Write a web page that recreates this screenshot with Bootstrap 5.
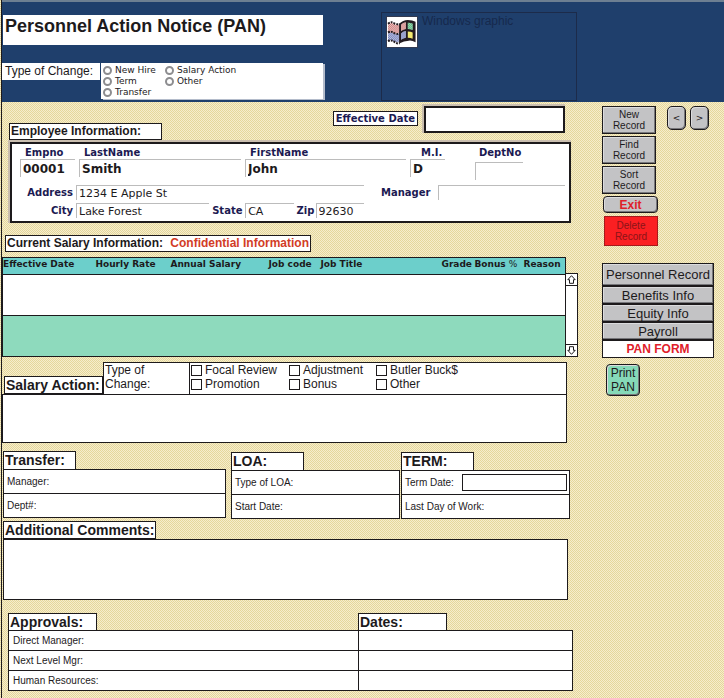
<!DOCTYPE html>
<html lang="en">
<head>
<meta charset="utf-8">
<meta name="viewport" content="width=device-width, initial-scale=1">
<title>Personnel Action Notice (PAN)</title>
<link href="https://cdn.jsdelivr.net/npm/bootstrap@5.3.0/dist/css/bootstrap.min.css" rel="stylesheet">
<style>
:root{--ink:#1d1a1c;--navy:#1f3f6c;--label:#1c1a52;--teal:#6ccfcb;--mint:#8edabd}
body{font-family:"Liberation Sans",Arial,sans-serif;font-size:12px;line-height:14px;color:var(--ink);
 background:repeating-conic-gradient(#f6edcd 0 25%,#e5d79b 0 50%) 0 0/2px 2px}
input,textarea,button{font:inherit;color:inherit;border-radius:0}
input,textarea{min-width:0;background:#fff;outline-offset:-1px}
.shell{min-height:100vh;margin-left:1px;border-left:1px solid var(--ink)}
.dj{font-family:"DejaVu Sans",Verdana,sans-serif}

/* banner */
.masthead{background:var(--navy);border-top:2px solid #6d7f92;height:102px;display:grid;
 grid-template-columns:minmax(0,321fr) minmax(0,58fr) minmax(0,196fr) minmax(0,147fr)}
.title-box{background:#fff;height:30px;margin:13px 0 18px 1px;padding:0 2px;font-size:18px;line-height:22px;font-weight:700;white-space:nowrap}
.kind-label{background:#fff;height:17px;line-height:16px;width:98px;padding-left:3px;white-space:nowrap}
.kind-box{background:#fff;height:36px;margin-left:1px;box-shadow:2px 1px 0 #b4bccb;padding:2px 0 0 2px;
 display:grid;grid-template:repeat(3,11px)/62px 1fr}
.kind-box label{font-size:9px;line-height:11px;display:flex;align-items:center;gap:3px;white-space:nowrap}
.kind-box input{appearance:none;width:9px;height:9px;border:2px solid #8d8d90;border-radius:50%;margin:0}
.kind-box input:checked{background:#333}
.graphic{grid-column:3;border:1px solid #1c2b4a;margin:10px 0 1px;padding:3px 4px;color:#16294d}
.graphic svg{width:32px;height:32px;background:#fff;border:1px solid #333a50}
.graphic span{margin-top:-2px}

.columns{display:grid;grid-template-columns:minmax(0,1fr) 112px;column-gap:22px;padding-right:10px}

/* heading tabs and framed boxes */
.tab{background:#fff;border:1px solid var(--ink);font-weight:700;padding:0 1px;white-space:nowrap;display:block;width:max-content}
.tab-l{font-size:14px;height:18px;line-height:17px}
.tab-s{font-size:12px;height:17px;line-height:15px}
.tab.w73{width:73px}
.tab.w89{width:89px}
.boxed{background:#fff;border:1px solid var(--ink)}
.area{display:block;width:100%;border:1px solid var(--ink);resize:none;padding:2px 4px}

/* employee panel */
#empinfo{margin:0 0 0 7px;width:153px}
.eff label{font-size:10px;line-height:13px;font-weight:700;color:var(--label);border:1px solid var(--ink);background:#fff;padding:0 2px;margin-top:9px;white-space:nowrap}
.eff input{width:141px;height:27px;border:2px solid var(--ink);margin:4px 15px 7px 6px;box-shadow:-1px -1px 0 1px #cbbfb0}
.emp{border:2px solid var(--ink);background:#fff;margin:2px 9px 0 8px;height:81px;padding:3px 4px 0 8px;box-shadow:-1px -1px 0 1px #cbbfb0}
.emp label{font-size:10px;line-height:12px;font-weight:700;color:var(--label);white-space:nowrap}
.emp input{border:0;border-top:1px solid #bcbcbc;border-left:1px solid #bcbcbc;padding:0 2px;width:100%;display:block}
.names{display:grid;grid-template-columns:minmax(0,55fr) minmax(0,162fr) minmax(0,161fr) minmax(0,35fr) minmax(0,48fr);column-gap:4px;padding-right:68px;height:38px}
.names label{display:block;padding-left:5px}
.names input{font-size:12px;font-weight:700;height:18px}
.names .mi label{padding-left:11px}
.names .dept{margin:0 -26px 0 26px}
.names .dept label{padding-left:4px;margin-bottom:3px}
.place{display:grid;grid-template-columns:53px minmax(0,132fr) 30px minmax(0,48fr) 16px minmax(0,48fr);column-gap:3px;row-gap:3px;flex:344 1 0;min-width:0}
.place label,.mgr label{align-self:center;text-align:right}
.place input,.mgr input{font-size:11px;height:15px}
.place .wide{grid-column:2/-1}
.mgr{flex:184 1 0;min-width:0;margin-left:17px}

/* salary history */
.sal-title{margin:12px 0 5px 3px}
.conf{color:#d23c26}
.sal{margin-right:2px}
.grid-table{width:100%;table-layout:fixed;border-collapse:collapse;font-size:9px}
.grid-table th{background:var(--teal);border:0 solid var(--ink);border-width:1px 0;height:17px;line-height:13px;padding:0 0 2px 1px;vertical-align:top;white-space:nowrap}
.grid-table th:first-child{border-left-width:1px;padding-left:0}
.grid-table th:last-child{border-right-width:1px}
.grid-table td{height:41px;border:1px solid var(--ink);background:#fff;padding:0}
.grid-table tr.alt td{background:var(--mint)}
.c-date{width:92px}.c-rate{width:75px}.c-sal{width:98px}.c-code{width:52px}.c-title{width:121px}.c-grade{width:33px}.c-bonus{width:49px}
.scroller{width:13px;margin-left:-1px;margin-top:16px;border:1px solid var(--ink);background:#fff;display:flex;flex-direction:column;justify-content:space-between;flex:none}
.scroller button{border:0;background:#fff;padding:0;height:12px;line-height:0}
.scroller button:first-child{border-bottom:1px solid var(--ink)}
.scroller button:last-child{border-top:1px solid var(--ink)}

/* salary action */
.act{margin:5px 13px 0 0}
.act .boxed{height:33px}
.act-tab{margin:0 0 1px 2px;width:99px}
.act-type{width:87px;padding:0 0 2px 1px}
.act-area{height:49px;margin-top:-1px}
.checks{display:grid;grid-template-columns:98px 87px 1fr;grid-auto-rows:14px;padding:0 0 2px 1px;flex:1;margin-left:-1px}
.checks label{display:flex;align-items:center;gap:3px;white-space:nowrap}
.checks input{appearance:none;width:11px;height:11px;border:1px solid var(--ink);margin:0}
.checks input:checked{background:var(--ink)}

/* transfer, leave, termination */
.trio{display:grid;grid-template-columns:minmax(0,227fr) minmax(0,169fr) minmax(0,169fr);column-gap:1px;margin:8px 10px 0 1px}
.trio section:first-child{margin-right:4px}
.trio section+section{padding-top:1px}
.pair{border:1px solid var(--ink);background:#fff;font-size:10px}
.trio .tab{border-bottom:0}
.pair>div{display:flex;align-items:center;height:23px;padding:0 2px 0 3px;white-space:nowrap}
.pair>div+div{border-top:1px solid var(--ink);height:24px}
.pair input{flex:1;border:0;height:17px}
.pair input.framed{border:1px solid var(--ink);margin-left:8px}

.comm{margin:2px 12px 0 1px}
.comm-area{height:61px}
.appr{margin:13px 7px 6px 6px}
.tabs2{display:grid;grid-template-columns:350fr 215fr}
.sign{width:100%;border-collapse:collapse;table-layout:fixed;font-size:10px;margin-top:-1px}
.sign th,.sign td{border:1px solid var(--ink);background:#fff;height:20px;padding:0 4px;font-weight:400;line-height:12px}
.sign th{width:62%}
.sign input{border:0;width:100%;height:16px;display:block}

/* side rail */
.rail-top{padding-top:4px}
.gb{background:#c3c3c5;border:1px solid var(--ink);box-shadow:inset -1px -1px 0 #77777b,inset 1px 1px 0 #dcdcde;padding:0;display:block}
.rec{width:54px;height:28px;font-size:10px;line-height:11px;margin-bottom:2px}
.rec.del{background:#fb1f22;color:#8a1418;height:30px;margin:3px 0 0 2px;box-shadow:none;border-color:#a51a1c}
.exit{width:55px;height:17px;border-radius:4px;color:#e0202a;font-weight:700;line-height:14px;margin-left:1px}
.steps{margin-right:5px}
.nav-b{width:19px;height:24px;border-radius:5px;font-size:9px}
.menu{margin-top:17px}
.menu .gb{width:100%;height:18px;line-height:15px;font-size:13px}
.menu .gb:first-child{height:23px}
.menu .gb.on{background:#fff;color:#e0202a;font-size:12px;font-weight:700;box-shadow:none}
.print{background:#86d9b8;width:34px;height:32px;border-radius:4px;line-height:14px;margin:6px 0 0 4px}
</style>
</head>
<body>
<div class="shell">
<header class="masthead">
  <div>
    <h1 class="title-box">Personnel Action Notice (PAN)</h1>
    <div class="d-flex align-items-start" role="radiogroup" aria-labelledby="kind">
      <div class="kind-label flex-shrink-0" id="kind">Type of Change:</div>
      <div class="kind-box dj flex-grow-1">
        <label><input type="radio" name="kind">New Hire</label><label><input type="radio" name="kind">Salary Action</label>
        <label><input type="radio" name="kind">Term</label><label><input type="radio" name="kind">Other</label>
        <label><input type="radio" name="kind">Transfer</label>
      </div>
    </div>
  </div>
  <div class="graphic d-flex align-items-start gap-1">
    <svg class="flex-shrink-0" viewBox="0 0 31 31" aria-hidden="true">
      <defs>
        <pattern id="pr" width="2" height="2" patternUnits="userSpaceOnUse"><path fill="#b8403e" d="M0 0h1v1H0zM1 1h1v1H1z"/></pattern>
        <pattern id="pb" width="2" height="2" patternUnits="userSpaceOnUse"><path fill="#34459c" d="M0 0h1v1H0zM1 1h1v1H1z"/></pattern>
        <pattern id="pg" width="2" height="2" patternUnits="userSpaceOnUse"><path fill="#1f9d57" d="M0 0h1v1H0zM1 1h1v1H1z"/></pattern>
      </defs>
      <path fill="url(#pr)" d="M1 8q3-3 6-1q3 2 6 1v8q-3 2-6 1q-3-2-6 0z"/>
      <path fill="url(#pb)" d="M1 17q3-2 6 0q3 1 6 0v8q-3 2-6 0q-3-2-6 0z"/>
      <path fill="none" stroke="#231b20" stroke-width="2" stroke-dasharray="2 1" d="M1 7q4-3 7 0q3 1 5 0M1 16q4-2 7 1q3 1 5 0M1 25q4-2 7 1q3 2 5 1"/>
      <path fill="#231b20" d="M12.500 7q4-4 9-4q5 0 8 2v21q-4-2-7-1.500q-5 0-10 3z"/>
      <path fill="#fff" d="M14.500 8q2-2 5-2.500v7q-3 .5-5 2zM14.500 17q2-2 5-2.500v7q-3 .5-5 2z"/>
      <path fill="url(#pr)" d="M14.500 8q2-2 5-2.500v7q-3 .5-5 2z"/>
      <path fill="url(#pb)" d="M14.500 17q2-2 5-2.500v7q-3 .5-5 2z"/>
      <path fill="#d9f2df" d="M21.500 6q3 0 5 1v6.500q-2-1-5-1z"/>
      <path fill="url(#pg)" d="M21.500 6q3 0 5 1v6.500q-2-1-5-1z"/>
      <path fill="#f3ea70" d="M21.500 15q3 0 5 1v6.500q-2-1-5-1z"/>
    </svg>
    <span class="text-nowrap">Windows graphic</span>
  </div>
</header>

<div class="columns">
<main>
  <div class="d-flex align-items-end">
    <h2 class="tab tab-s" id="empinfo">Employee Information:</h2>
    <div class="eff dj d-flex align-items-start ms-auto">
      <label for="eff">Effective Date</label><input id="eff" type="text">
    </div>
  </div>
  <section class="emp dj" aria-labelledby="empinfo">
    <div class="names">
      <div><label for="no">Empno</label><input id="no" value="00001"></div>
      <div><label for="ln">LastName</label><input id="ln" value="Smith"></div>
      <div><label for="fn">FirstName</label><input id="fn" value="John"></div>
      <div class="mi"><label for="mi">M.I.</label><input id="mi" value="D"></div>
      <div class="dept"><label for="dn">DeptNo</label><input id="dn"></div>
    </div>
    <div class="d-flex align-items-start">
      <div class="place">
        <label for="ad">Address</label><input id="ad" class="wide" value="1234 E Apple St">
        <label for="ci">City</label><input id="ci" value="Lake Forest">
        <label for="st">State</label><input id="st" value="CA">
        <label for="zi">Zip</label><input id="zi" value="92630">
      </div>
      <div class="mgr d-flex gap-2"><label for="mg">Manager</label><input id="mg"></div>
    </div>
  </section>

  <h2 class="tab tab-s sal-title">Current Salary Information: <span class="conf ms-1">Confidential Information</span></h2>
  <div class="d-flex sal">
    <table class="grid-table dj">
      <colgroup><col class="c-date"><col class="c-rate"><col class="c-sal"><col class="c-code"><col class="c-title"><col class="c-grade"><col class="c-bonus"><col></colgroup>
      <thead><tr><th>Effective Date</th><th>Hourly Rate</th><th>Annual Salary</th><th>Job code</th><th>Job Title</th><th>Grade</th><th>Bonus <span class="fw-normal">%</span></th><th>Reason</th></tr></thead>
      <tbody><tr><td colspan="8"></td></tr><tr class="alt"><td colspan="8"></td></tr></tbody>
    </table>
    <div class="scroller">
      <button type="button" aria-label="Scroll up"><svg width="9" height="9" viewBox="0 0 9 9"><path d="M4.500.7l3.700 4H6.500v3.600h-4V4.700H.8z" fill="#fff" stroke="#1d1a1c"/></svg></button>
      <button type="button" aria-label="Scroll down"><svg width="9" height="9" viewBox="0 0 9 9"><path d="M4.500 8.300l3.700-4H6.500V.7h-4v3.600H.8z" fill="#fff" stroke="#1d1a1c"/></svg></button>
    </div>
  </div>

  <section class="act">
    <div class="d-flex align-items-end">
      <h2 class="tab tab-l act-tab">Salary Action:</h2>
      <div class="boxed act-type">Type of<br>Change:</div>
      <div class="boxed checks">
        <label><input type="checkbox">Focal Review</label><label><input type="checkbox">Adjustment</label><label><input type="checkbox">Butler Buck$</label>
        <label><input type="checkbox">Promotion</label><label><input type="checkbox">Bonus</label><label><input type="checkbox">Other</label>
      </div>
    </div>
    <textarea class="area act-area" aria-label="Salary action notes"></textarea>
  </section>

  <div class="trio">
    <section><h2 class="tab tab-l w73 mb-0">Transfer:</h2>
      <div class="pair"><div><label for="tm">Manager:</label><input id="tm"></div><div><label for="td">Dept#:</label><input id="td"></div></div></section>
    <section><h2 class="tab tab-l w73 mb-0">LOA:</h2>
      <div class="pair"><div><label for="lt">Type of LOA:</label><input id="lt"></div><div><label for="ls">Start Date:</label><input id="ls"></div></div></section>
    <section><h2 class="tab tab-l w73 mb-0">TERM:</h2>
      <div class="pair"><div><label for="te">Term Date:</label><input id="te" class="framed"></div><div><label for="lw">Last Day of Work:</label><input id="lw"></div></div></section>
  </div>

  <section class="comm">
    <label class="tab tab-l" for="cm">Additional Comments:</label>
    <textarea class="area comm-area" id="cm"></textarea>
  </section>

  <section class="appr">
    <div class="tabs2"><h2 class="tab tab-l w89 mb-0">Approvals:</h2><h2 class="tab tab-l w89 mb-0">Dates:</h2></div>
    <table class="sign">
      <tbody>
      <tr><th scope="row">Direct Manager:</th><td><input aria-label="Direct Manager date"></td></tr>
      <tr><th scope="row">Next Level Mgr:</th><td><input aria-label="Next Level Mgr date"></td></tr>
      <tr><th scope="row">Human Resources:</th><td><input aria-label="Human Resources date"></td></tr>
      </tbody>
    </table>
  </section>
</main>

<aside>
  <div class="d-flex rail-top">
    <div>
      <button type="button" class="gb rec">New<br>Record</button>
      <button type="button" class="gb rec">Find<br>Record</button>
      <button type="button" class="gb rec">Sort<br>Record</button>
      <button type="button" class="gb exit">Exit</button>
      <button type="button" class="gb rec del">Delete<br>Record</button>
    </div>
    <div class="steps d-flex gap-1 ms-auto align-items-start">
      <button type="button" class="gb nav-b dj" aria-label="Previous record">&lt;</button><button type="button" class="gb nav-b dj" aria-label="Next record">&gt;</button>
    </div>
  </div>
  <nav class="menu">
    <button type="button" class="gb">Personnel Record</button>
    <button type="button" class="gb">Benefits Info</button>
    <button type="button" class="gb">Equity Info</button>
    <button type="button" class="gb">Payroll</button>
    <button type="button" class="gb on">PAN FORM</button>
  </nav>
  <button type="button" class="gb print">Print<br>PAN</button>
</aside>
</div>
</div>
<script src="https://cdn.jsdelivr.net/npm/bootstrap@5.3.0/dist/js/bootstrap.bundle.min.js"></script>
</body>
</html>
